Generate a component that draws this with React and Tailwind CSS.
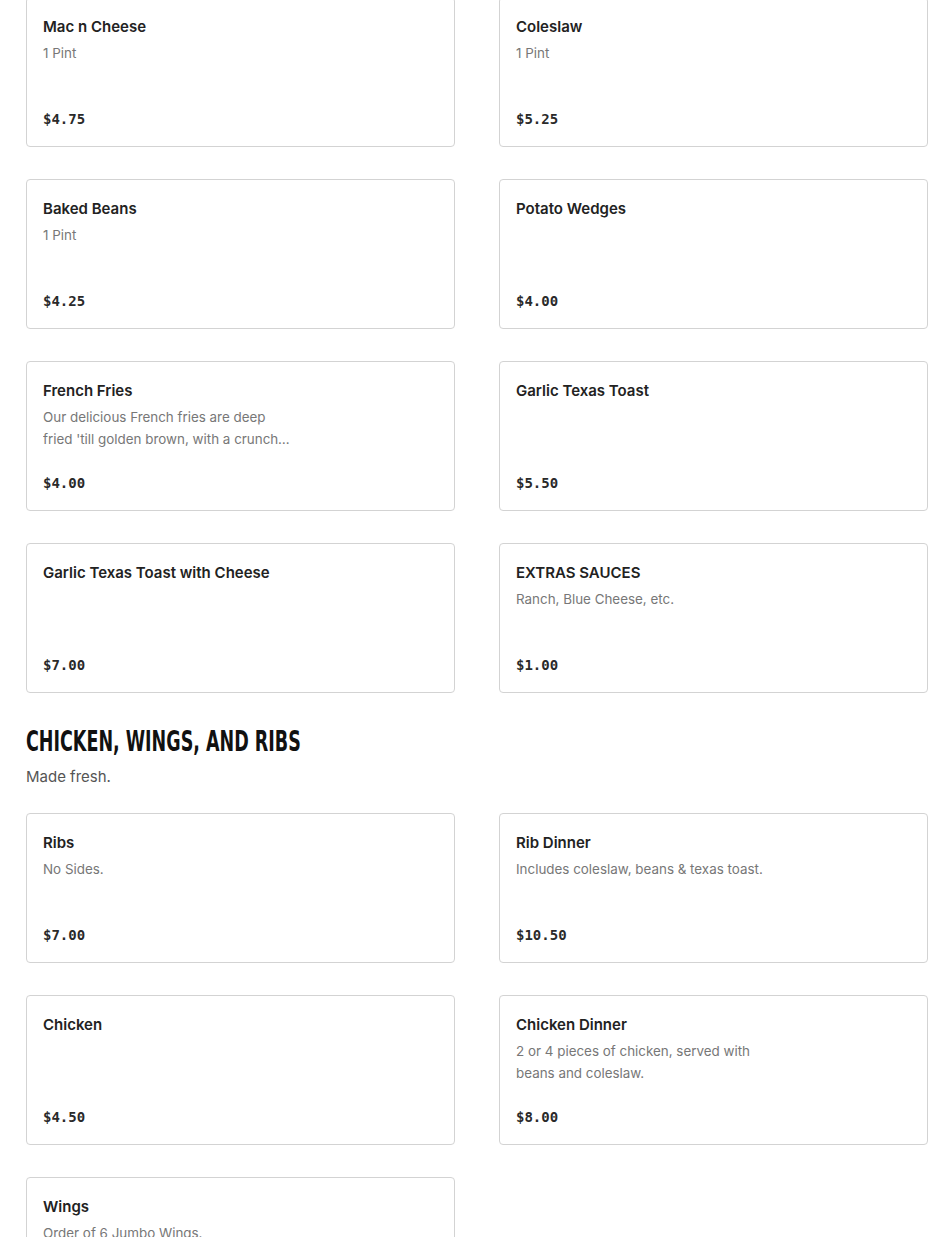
const sides = [
  { name: "Mac n Cheese", desc: "1 Pint", price: "$4.75" },
  { name: "Coleslaw", desc: "1 Pint", price: "$5.25" },
  { name: "Baked Beans", desc: "1 Pint", price: "$4.25" },
  { name: "Potato Wedges", desc: "", price: "$4.00" },
  {
    name: "French Fries",
    desc: "Our delicious French fries are deep fried 'till golden brown, with a crunchy outside and a fluffy inside.",
    price: "$4.00",
  },
  { name: "Garlic Texas Toast", desc: "", price: "$5.50" },
  { name: "Garlic Texas Toast with Cheese", desc: "", price: "$7.00" },
  { name: "EXTRAS SAUCES", desc: "Ranch, Blue Cheese, etc.", price: "$1.00" },
];

const chicken = [
  { name: "Ribs", desc: "No Sides.", price: "$7.00" },
  { name: "Rib Dinner", desc: "Includes coleslaw, beans & texas toast.", price: "$10.50" },
  { name: "Chicken", desc: "", price: "$4.50" },
  {
    name: "Chicken Dinner",
    desc: "2 or 4 pieces of chicken, served with beans and coleslaw.",
    price: "$8.00",
  },
  { name: "Wings", desc: "Order of 6 Jumbo Wings.", price: "$6.00" },
];

function ItemCard({ item }) {
  return (
    <div className="h-[150px] border border-[#d3d3d3] rounded-[4px] bg-white px-4 pt-[17px] pb-4 flex flex-col">
      <div className="text-[15px] leading-6 font-semibold text-[#222]">{item.name}</div>
      <div className="mt-[3px] w-[252px] h-[44px] text-[13.4px] leading-[22px] text-[#777] line-clamp-2">
        {item.desc}
      </div>
      <div
        className="mt-auto text-[14px] leading-[22px] font-bold text-[#2a2a2a]"
        style={{ fontFamily: "'DejaVu Sans Mono', monospace" }}
      >
        {item.price}
      </div>
    </div>
  );
}

function Grid({ items }) {
  return (
    <div className="grid grid-cols-2 gap-x-[44px] gap-y-[32px]">
      {items.map((it) => (
        <ItemCard key={it.name} item={it} />
      ))}
    </div>
  );
}

export default function App() {
  return (
    <div
      className="bg-white min-h-screen overflow-hidden"
      style={{ fontFamily: "Inter, 'Noto Sans', sans-serif" }}
    >
      <div className="w-[902px] ml-[26px] -mt-[3px]">
        <Grid items={sides} />

        <div className="mt-[29px] mb-[24px]">
          <h2
            className="text-[28px] leading-[40px] font-bold uppercase text-[#111] whitespace-nowrap origin-left scale-x-[0.695]"
            style={{ fontFamily: "'DejaVu Sans Condensed', sans-serif" }}
          >
            CHICKEN, WINGS, AND RIBS
          </h2>
          <p className="mt-[3px] text-[15px] leading-6 text-[#555]">Made fresh.</p>
        </div>

        <Grid items={chicken} />
      </div>
    </div>
  );
}
